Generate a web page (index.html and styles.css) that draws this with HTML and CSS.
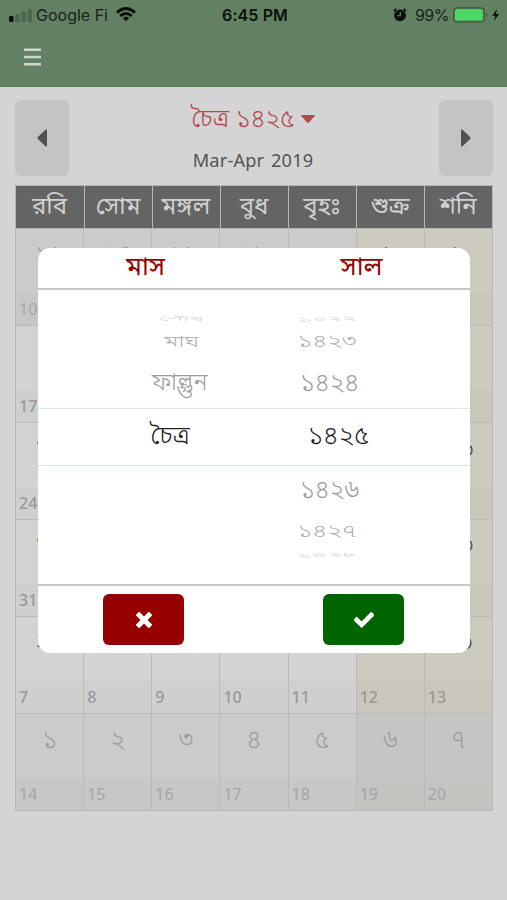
FILE: index.html
```
<!DOCTYPE html>
<html lang="bn">
<head>
<meta charset="utf-8">
<title>চৈত্র ১৪২৫</title>
<link rel="stylesheet" href="styles.css">
</head>
<body>
<header class="top">
  <div class="status">
    <div class="carrier">
      <svg width="23" height="14" viewBox="0 0 23 14"><rect x="0" y="8" width="4.6" height="6" rx="1.4" fill="#0a100a"/><g fill="#4b674d"><rect x="6.3" y="6" width="4.4" height="8" rx="1"/><rect x="12.5" y="3.4" width="4.4" height="10.6" rx="1"/><rect x="18.6" y="1" width="4.4" height="13" rx="1"/></g></svg>
      <span class="name">Google Fi</span>
      <svg class="wifi" width="20" height="15" viewBox="0 0 20 15"><g fill="none" stroke="#0a100a" stroke-width="2.9"><path d="M1 5.6Q10-2.400 19 5.600"/><path d="M4.300 9Q10 4 15.700 9"/></g><path d="M6.900 11Q10 8.500 13.100 11L10 14.200Z" fill="#0a100a"/></svg>
    </div>
    <div class="time">6:45 PM</div>
    <div class="power">
      <svg width="14" height="14" viewBox="0 0 14 14"><circle cx="7" cy="7.300" r="5.900" fill="#0a100a"/><path d="M.9 3.200 3.300.9M13.100 3.200 10.700.9" stroke="#0a100a" stroke-width="1.800"/><path d="M7.300 4v3.700H4.600" fill="none" stroke="#628062" stroke-width="1.200"/></svg>
      <span class="pct">99%</span>
      <svg width="48" height="16" viewBox="0 0 48 16"><rect x=".7" y=".9" width="30.400" height="14" rx="3.500" fill="none" stroke="#3f573f" stroke-width="1.200"/><rect x="2" y="2.200" width="27.800" height="11.400" rx="2" fill="#4bd964"/><path d="M33 5.700Q35.600 8 33 10.300Z" fill="#3f573f"/><path d="M44.200 1.800 39.200 8.700h3.200L40.700 14.200 46.200 7.100h-3.300Z" fill="#0a100a"/></svg>
    </div>
  </div>
  <svg class="menu" width="17" height="18" viewBox="0 0 17 18"><path d="M0 1.700h17M0 9h17M0 16.300h17" stroke="#ced7cd" stroke-width="2.400"/></svg>
</header>

<main class="page">
  <div class="nav">
    <div class="arrow"><svg width="10" height="18" viewBox="0 0 10 18"><path d="M.6 8.200 8.700.6Q10 0 10 1.400V16.600Q10 18 8.700 17.400L.6 9.800Q0 9 .6 8.200Z" fill="#525252"/></svg></div>
    <div class="heading">
      <div class="month"><span class="month-name">চৈত্র ১৪২৫</span><svg width="14" height="8" viewBox="0 0 14 8"><path d="M1 0H13Q14.300.1 13.500 1.200L7.900 7.500Q7 8.300 6.100 7.500L.5 1.200Q-.3.1 1 0Z" fill="#b24a50"/></svg></div>
      <div class="greg">Mar-Apr 2019</div>
    </div>
    <div class="arrow"><svg width="10" height="18" viewBox="0 0 10 18"><path d="M9.400 8.200 1.300.6Q0 0 0 1.400V16.600Q0 18 1.300 17.400L9.400 9.800Q10 9 9.400 8.200Z" fill="#525252"/></svg></div>
  </div>

  <div class="days"><div>রবি</div><div>সোম</div><div>মঙ্গল</div><div>বুধ</div><div>বৃহঃ</div><div>শুক্র</div><div>শনি</div></div>

  <div class="grid">
    <div class="cell out"><b>২৬</b><i>10</i></div><div class="cell out"><b>২৭</b><i>11</i></div><div class="cell out"><b>২৮</b><i>12</i></div><div class="cell out"><b>২৯</b><i>13</i></div><div class="cell out"><b>৩০</b><i>14</i></div><div class="cell off"><b>১</b><i>15</i></div><div class="cell off"><b>২</b><i>16</i></div>
    <div class="cell"><b>৩</b><i>17</i></div><div class="cell"><b>৪</b><i>18</i></div><div class="cell"><b>৫</b><i>19</i></div><div class="cell"><b>৬</b><i>20</i></div><div class="cell"><b>৭</b><i>21</i></div><div class="cell off"><b>৮</b><i>22</i></div><div class="cell off"><b>৯</b><i>23</i></div>
    <div class="cell"><b>১০</b><i>24</i></div><div class="cell"><b>১১</b><i>25</i></div><div class="cell"><b>১২</b><i>26</i></div><div class="cell"><b>১৩</b><i>27</i></div><div class="cell"><b>১৪</b><i>28</i></div><div class="cell off"><b>১৫</b><i>29</i></div><div class="cell off"><b>১৬</b><i>30</i></div>
    <div class="cell"><b>১৭</b><i>31</i></div><div class="cell"><b>১৮</b><i>1</i></div><div class="cell"><b>১৯</b><i>2</i></div><div class="cell"><b>২০</b><i>3</i></div><div class="cell"><b>২১</b><i>4</i></div><div class="cell off"><b>২২</b><i>5</i></div><div class="cell off"><b>২৩</b><i>6</i></div>
    <div class="cell"><b>২৪</b><i>7</i></div><div class="cell"><b>২৫</b><i>8</i></div><div class="cell"><b>২৬</b><i>9</i></div><div class="cell"><b>২৭</b><i>10</i></div><div class="cell"><b>২৮</b><i>11</i></div><div class="cell off"><b>২৯</b><i>12</i></div><div class="cell off"><b>৩০</b><i>13</i></div>
    <div class="cell out"><b>১</b><i>14</i></div><div class="cell out"><b>২</b><i>15</i></div><div class="cell out"><b>৩</b><i>16</i></div><div class="cell out"><b>৪</b><i>17</i></div><div class="cell out"><b>৫</b><i>18</i></div><div class="cell out off"><b>৬</b><i>19</i></div><div class="cell out off"><b>৭</b><i>20</i></div>
  </div>
</main>

<section class="dialog">
  <div class="labels"><div>মাস</div><div>সাল</div></div>
  <div class="picker">
    <div class="wheel months">
      <div class="row r3"><span>পৌষ</span></div>
      <div class="row r2"><span>মাঘ</span></div>
      <div class="row r1"><span>ফাল্গুন</span></div>
      <div class="row sel"><span>চৈত্র</span></div>
    </div>
    <div class="wheel years">
      <div class="row r3"><span>১৪২২</span></div>
      <div class="row r2"><span>১৪২৩</span></div>
      <div class="row r1"><span>১৪২৪</span></div>
      <div class="row sel"><span>১৪২৫</span></div>
      <div class="row r1"><span>১৪২৬</span></div>
      <div class="row r2"><span>১৪২৭</span></div>
      <div class="row r3"><span>১৪২৮</span></div>
    </div>
  </div>
  <div class="actions">
    <div class="btn cancel"><svg width="16" height="16" viewBox="0 0 16 16"><path d="M3.200 3.200 12.800 12.800M12.800 3.200 3.200 12.800" stroke="#fff" stroke-width="5" stroke-linecap="square"/></svg></div>
    <div class="btn ok"><svg width="20" height="16" viewBox="0 0 20 16"><path d="M2.700 8 7.700 12.700 17.300 3" fill="none" stroke="#fff" stroke-width="4.800" stroke-linecap="square"/></svg></div>
  </div>
</section>
</body>
</html>
```
FILE: styles.css
```
* { box-sizing: border-box; }
body {
  margin: 0;
  height: 900px;
  overflow: hidden;
  position: relative;
  background: #d4d4d4;
  font-family: "Noto Sans", "Noto Sans Bengali", sans-serif;
}
svg { display: block; flex: none; }
.top { height: 87px; background: #628062; }
.status {
  display: grid;
  grid-template-columns: 1fr auto 1fr;
  align-items: center;
  height: 30px;
  padding: 0 6px 0 9px;
  font: 16px/20px Inter, sans-serif;
  color: #0a100a;
}
.carrier, .power { display: flex; align-items: center; }
.carrier svg { margin-top: -1px; }
.name { margin-left: 4px; color: #182418; }
.carrier .wifi { margin-left: 8px; }
.time { font-weight: 600; letter-spacing: .1px; }
.power { justify-content: flex-end; }
.power svg { margin-top: -1px; }
.pct { margin: 0 4px 0 8px; color: #182418; letter-spacing: -.5px; }
.menu { margin: 18px 0 0 24px; }

.page { padding: 13px 14px 0 15px; }
.nav { display: flex; justify-content: space-between; height: 76px; }
.arrow {
  width: 54px;
  height: 76px;
  border-radius: 6px;
  background: #c4c4c4;
  display: flex;
  align-items: center;
  justify-content: center;
}
.heading { text-align: center; }
.month { display: flex; align-items: center; justify-content: center; gap: 6px; height: 38px; padding-right: 2px; }
.month-name { font-size: 25px; font-weight: 300; line-height: 38px; margin-top: -4px; color: #b24a50; }
.greg { margin: 9px 2px 0 0; font-size: 18.2px; line-height: 26px; letter-spacing: .15px; word-spacing: 2px; color: #555; }

.days {
  display: grid;
  grid-template-columns: repeat(7, 1fr);
  margin-top: 9px;
  height: 44px;
  background: #646464;
  border: 1px solid #b5b5b5;
  color: #d0d0d0;
  font-size: 24px;
  line-height: 38px;
  text-align: center;
}
.days div { padding-right: 1px; }
.days div + div { border-left: 1px solid #b5b5b5; }
.grid {
  display: grid;
  grid-template-columns: repeat(7, 1fr);
  grid-auto-rows: 96.95px;
  border-left: 1px solid #b9b9b9;
}
.cell {
  display: flex;
  flex-direction: column;
  justify-content: space-between;
  border-right: 1px solid #bababa;
  border-bottom: 1px solid #bababa;
  background: #d3d3d3;
}
.cell b { height: 50px; font-size: 25px; font-weight: 300; line-height: 48px; text-align: center; color: #484848; }
.cell i { height: 32px; padding-left: 3px; background: #cfcfcf; font-size: 16px; font-style: normal; font-weight: 500; line-height: 32px; color: #989898; }
.off { background: #cdcac0; }
.off i { background: #c9c7bc; }
.out { background: #cbcbcb; }
.out b { color: #9c9c9c; }
.out i { background: #c7c7c7; font-weight: 400; color: #a5a5a5; }
.out.off { background: #c5c5c4; }
.out.off i { background: #c3c3c0; }

.dialog {
  position: absolute;
  left: 38px;
  top: 248px;
  width: 432px;
  height: 405px;
  border-radius: 12px;
  background: #fff;
  overflow: hidden;
}
.labels {
  display: grid;
  grid-template-columns: 1fr 1fr;
  height: 42px;
  border-bottom: 2px solid #c8c8c8;
  font-size: 26px;
  line-height: 34px;
  text-align: center;
  color: #970000;
}
.labels div { padding-right: 1px; }
.picker {
  display: grid;
  grid-template-columns: 1fr 1fr;
  height: 294px;
  padding-top: 21px;
  background: linear-gradient(#d2eee2, #d2eee2) 0 118px / 100% 1px no-repeat, linear-gradient(#d2eee2, #d2eee2) 0 175px / 100% 1px no-repeat;
}
.row { display: flex; justify-content: center; color: #9c9c9c; font-weight: 300; white-space: nowrap; }
.sel { height: 56px; font-size: 26px; line-height: 53px; color: #222; }
.r1 { height: 50px; font-size: 25px; line-height: 46px; }
.r2 { height: 33px; font-size: 25px; line-height: 30px; color: #b0b0b0; }
.r2 span { transform: scaleY(.68); }
.r3 { height: 14px; overflow: hidden; font-size: 25px; line-height: 13px; color: #d4d4d4; }
.r3 span { transform: scaleY(.28); }
.months .sel { padding-left: 48px; }
.months .r1 { padding-left: 67px; font-size: 24px; }
.months .r2, .months .r3 { padding-left: 71px; font-size: 24px; }
.years .sel { padding-right: 47px; }
.years .r1 { padding-right: 65px; }
.years .r2, .years .r3 { padding-right: 70px; }
.years .sel ~ .row { line-height: 49px; }
.years .sel ~ .r2 { line-height: 32px; }
.years .sel ~ .r3 { line-height: 13px; }
.actions {
  display: flex;
  justify-content: space-between;
  height: 69px;
  padding: 8px 66px 0 65px;
  border-top: 2px solid #c8c8c8;
}
.btn { width: 81px; height: 51px; border-radius: 6px; display: flex; align-items: center; justify-content: center; }
.cancel { background: #970000; }
.ok { background: #006500; }
```
